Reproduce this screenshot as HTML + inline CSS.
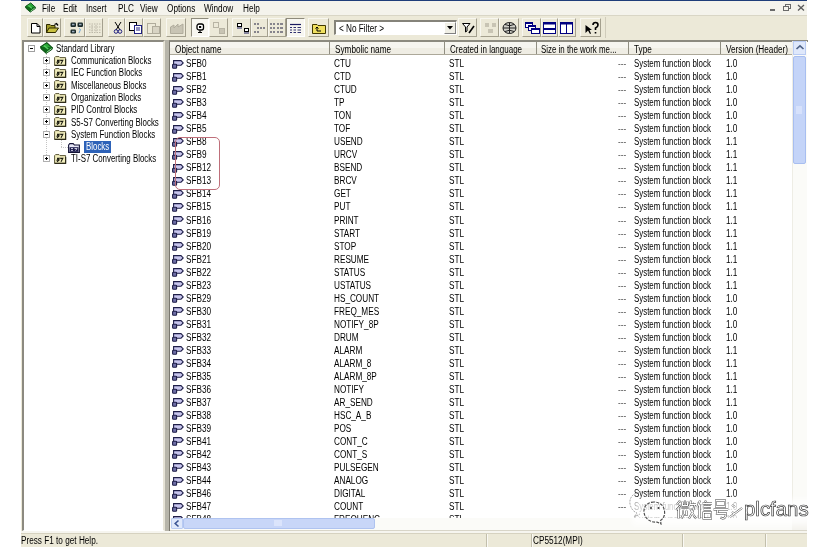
<!DOCTYPE html><html><head><meta charset="utf-8"><style>
*{margin:0;padding:0;box-sizing:border-box}
html,body{width:836px;height:547px;overflow:hidden;background:#fff}
body{position:relative;font-family:"Liberation Sans",sans-serif;font-size:10px;color:#000}
.a{position:absolute}
.t{position:absolute;white-space:nowrap;line-height:11px;transform:scaleX(.82);transform-origin:0 0}
.r{transform-origin:100% 0}
.tr{transform:scaleX(.79)}
svg{position:absolute;overflow:visible}
</style></head><body>

<div class="a" style="left:21px;top:0;width:786px;height:547px;background:#ece9d8"></div>
<div class="a" style="left:21px;top:0;width:786px;height:1px;background:#1f3d7a"></div>
<div class="a" style="left:21px;top:1px;width:786px;height:15px;background:#f4f3ec"></div>
<div class="a" style="left:21px;top:15px;width:786px;height:1px;background:#d9d6c6"></div>
<svg style="left:25px;top:2px" width="11" height="11" viewBox="0 0 13 12">
<path d="M0.8 4.6 L6.8 0.6 L12.2 5.6 L6.2 10.2 Z" fill="#2aa838" stroke="#0b4a12" stroke-width="1.1"/>
<path d="M0.8 4.6 L0.8 6.6 L6.2 11.4 L12.2 7.2 L12.2 5.6" fill="#0e6a1a" stroke="#0b4a12" stroke-width="1"/>
<path d="M6.6 10.4 L11.6 6.6" stroke="#9be39f" stroke-width="1"/>
<path d="M4 3.6 L8.2 7" stroke="#55d060" stroke-width="1.6"/>
</svg>
<div class="t" style="left:41.5px;top:2.6px;">File</div>
<div class="t" style="left:62.8px;top:2.6px;">Edit</div>
<div class="t" style="left:85.8px;top:2.6px;">Insert</div>
<div class="t" style="left:117.8px;top:2.6px;">PLC</div>
<div class="t" style="left:140.2px;top:2.6px;">View</div>
<div class="t" style="left:166.5px;top:2.6px;">Options</div>
<div class="t" style="left:204.0px;top:2.6px;">Window</div>
<div class="t" style="left:242.8px;top:2.6px;">Help</div>
<div class="a" style="left:770px;top:9px;width:5px;height:2px;background:#6a6a6a"></div>
<svg style="left:783px;top:4px" width="8" height="7"><rect x="2.5" y="0.5" width="5" height="4" fill="none" stroke="#6a6a6a"/><rect x="0.5" y="2.5" width="5" height="4" fill="#f4f3ec" stroke="#6a6a6a"/></svg>
<svg style="left:797px;top:4px" width="8" height="7"><path d="M1 1 L7 6.5 M7 1 L1 6.5" stroke="#5a5a5a" stroke-width="1.3"/></svg>
<div class="a" style="left:27px;top:18px;width:16px;height:19px;border-right:1px solid #a4a08e;border-bottom:1px solid #a4a08e;border-left:1px solid #f8f7f0;border-top:1px solid #f8f7f0"></div>
<div class="a" style="left:43px;top:18px;width:18px;height:19px;border-right:1px solid #a4a08e;border-bottom:1px solid #a4a08e;border-left:1px solid #f8f7f0;border-top:1px solid #f8f7f0"></div>
<div class="a" style="left:64px;top:18px;width:21px;height:19px;border-right:1px solid #a4a08e;border-bottom:1px solid #a4a08e;border-left:1px solid #f8f7f0;border-top:1px solid #f8f7f0"></div>
<div class="a" style="left:85px;top:18px;width:18px;height:19px;border-right:1px solid #a4a08e;border-bottom:1px solid #a4a08e;border-left:1px solid #f8f7f0;border-top:1px solid #f8f7f0"></div>
<div class="a" style="left:108px;top:18px;width:17px;height:19px;border-right:1px solid #a4a08e;border-bottom:1px solid #a4a08e;border-left:1px solid #f8f7f0;border-top:1px solid #f8f7f0"></div>
<div class="a" style="left:125px;top:18px;width:18px;height:19px;border-right:1px solid #a4a08e;border-bottom:1px solid #a4a08e;border-left:1px solid #f8f7f0;border-top:1px solid #f8f7f0"></div>
<div class="a" style="left:143px;top:18px;width:18px;height:19px;border-right:1px solid #a4a08e;border-bottom:1px solid #a4a08e;border-left:1px solid #f8f7f0;border-top:1px solid #f8f7f0"></div>
<div class="a" style="left:166px;top:18px;width:20px;height:19px;border-right:1px solid #a4a08e;border-bottom:1px solid #a4a08e;border-left:1px solid #f8f7f0;border-top:1px solid #f8f7f0"></div>
<div class="a" style="left:191px;top:18px;width:18px;height:19px;background:#f7f6f0;border-right:1px solid #fff;border-bottom:1px solid #fff;border-left:1px solid #8d8a7c;border-top:1px solid #8d8a7c"></div>
<div class="a" style="left:209px;top:18px;width:19px;height:19px;border-right:1px solid #a4a08e;border-bottom:1px solid #a4a08e;border-left:1px solid #f8f7f0;border-top:1px solid #f8f7f0"></div>
<div class="a" style="left:232px;top:18px;width:19px;height:19px;border-right:1px solid #a4a08e;border-bottom:1px solid #a4a08e;border-left:1px solid #f8f7f0;border-top:1px solid #f8f7f0"></div>
<div class="a" style="left:251px;top:18px;width:17px;height:19px;border-right:1px solid #a4a08e;border-bottom:1px solid #a4a08e;border-left:1px solid #f8f7f0;border-top:1px solid #f8f7f0"></div>
<div class="a" style="left:268px;top:18px;width:18px;height:19px;border-right:1px solid #a4a08e;border-bottom:1px solid #a4a08e;border-left:1px solid #f8f7f0;border-top:1px solid #f8f7f0"></div>
<div class="a" style="left:286px;top:18px;width:19px;height:19px;background:#f7f6f0;border-right:1px solid #fff;border-bottom:1px solid #fff;border-left:1px solid #8d8a7c;border-top:1px solid #8d8a7c"></div>
<div class="a" style="left:308px;top:18px;width:21px;height:19px;border-right:1px solid #a4a08e;border-bottom:1px solid #a4a08e;border-left:1px solid #f8f7f0;border-top:1px solid #f8f7f0"></div>
<div class="a" style="left:458px;top:18px;width:19px;height:19px;border-right:1px solid #a4a08e;border-bottom:1px solid #a4a08e;border-left:1px solid #f8f7f0;border-top:1px solid #f8f7f0"></div>
<div class="a" style="left:480px;top:18px;width:19px;height:19px;border-right:1px solid #a4a08e;border-bottom:1px solid #a4a08e;border-left:1px solid #f8f7f0;border-top:1px solid #f8f7f0"></div>
<div class="a" style="left:499px;top:18px;width:20px;height:19px;border-right:1px solid #a4a08e;border-bottom:1px solid #a4a08e;border-left:1px solid #f8f7f0;border-top:1px solid #f8f7f0"></div>
<div class="a" style="left:522px;top:18px;width:19px;height:19px;border-right:1px solid #a4a08e;border-bottom:1px solid #a4a08e;border-left:1px solid #f8f7f0;border-top:1px solid #f8f7f0"></div>
<div class="a" style="left:541px;top:18px;width:17px;height:19px;border-right:1px solid #a4a08e;border-bottom:1px solid #a4a08e;border-left:1px solid #f8f7f0;border-top:1px solid #f8f7f0"></div>
<div class="a" style="left:558px;top:18px;width:18px;height:19px;border-right:1px solid #a4a08e;border-bottom:1px solid #a4a08e;border-left:1px solid #f8f7f0;border-top:1px solid #f8f7f0"></div>
<div class="a" style="left:580px;top:18px;width:21px;height:19px;border-right:1px solid #a4a08e;border-bottom:1px solid #a4a08e;border-left:1px solid #f8f7f0;border-top:1px solid #f8f7f0"></div>
<div class="a" style="left:605px;top:17px;width:1px;height:21px;background:#d0ccbb"></div>
<div class="a" style="left:334px;top:21px;width:123px;height:14px;background:#fff;border:1px solid #7f9db9"></div>
<div class="a" style="left:334px;top:20px;width:123px;height:15px;border-top:2px solid #85837a;border-left:2px solid #85837a;border-bottom:1px solid #fff;border-right:1px solid #fff"></div>
<div class="a" style="left:444px;top:22px;width:12px;height:12px;background:#f0efe6;border-right:1px solid #808080;border-bottom:1px solid #808080;border-top:1px solid #fff;border-left:1px solid #fff"></div>
<svg style="left:447px;top:26px" width="7" height="4"><path d="M0 0 L6 0 L3 3.5 Z" fill="#000"/></svg>
<div class="t" style="left:339.0px;top:22.6px;">&lt; No Filter &gt;</div>
<svg style="left:31px;top:23px" width="10" height="11"><path d="M0.5 0.5 H6 L9 3.5 V10 H0.5 Z" fill="#fff" stroke="#000"/><path d="M6 0.5 V3.5 H9" fill="none" stroke="#000"/></svg>
<svg style="left:46px;top:23px" width="13" height="10"><path d="M0.5 1.5 H4 L5 2.5 H9 V9.5 H0.5 Z" fill="#a09a28" stroke="#2e2a00"/><path d="M0.5 9.5 L3 5 H12.5 L9.5 9.5 Z" fill="#c8c040" stroke="#2e2a00"/><path d="M8.5 1.5 L10.5 0.5 L12 2.5" fill="none" stroke="#000" stroke-width="1.3"/></svg>
<svg style="left:70px;top:22px" width="14" height="12"><rect x="0.5" y="0.5" width="5.5" height="4.5" rx="1.2" fill="#1a2a2a"/><rect x="7.5" y="0.5" width="5.5" height="4.5" rx="1.2" fill="#1a2a2a"/><rect x="0.5" y="7.5" width="5.5" height="4" rx="1.2" fill="#1a2a2a"/><rect x="2" y="1.8" width="2.5" height="1.5" fill="#9ab"/><rect x="9" y="1.8" width="2.5" height="1.5" fill="#9ab"/><rect x="2" y="8.8" width="2.5" height="1.5" fill="#9ab"/><path d="M9 6.5 L10.5 7.5 L9 11" stroke="#70a8d8" fill="none"/></svg>
<svg style="left:89px;top:23px" width="12" height="10"><path d="M0 1 H12 M0 4 H12 M0 7 H12 M0 9.5 H12 M3 2 V9 M7 2 V9" stroke="#bcb8a8" stroke-dasharray="1.5 1"/></svg>
<svg style="left:114px;top:22px" width="8" height="12"><path d="M1 0 L6 8 M7 0 L2 8" stroke="#000"/><circle cx="2" cy="9.5" r="1.8" fill="none" stroke="#202080"/><circle cx="6" cy="9.5" r="1.8" fill="none" stroke="#202080"/></svg>
<svg style="left:129px;top:22px" width="13" height="12"><rect x="0.5" y="0.5" width="7" height="8" fill="#fff" stroke="#000"/><rect x="5.5" y="3.5" width="7" height="8" fill="#fff" stroke="#202080"/><path d="M7 6 H11 M7 8 H11" stroke="#202080"/></svg>
<svg style="left:147px;top:22px" width="13" height="12"><rect x="0.5" y="1.5" width="8" height="10" fill="none" stroke="#b0ac9c"/><rect x="5.5" y="4.5" width="7" height="7" fill="#d8d4c4" stroke="#b0ac9c"/></svg>
<svg style="left:170px;top:22px" width="14" height="12"><path d="M0.5 11.5 V5 L4 3 V6 L8 2 V5 L13 2 V11.5 Z" fill="#c8c4b4" stroke="#b0ac9c"/></svg>
<svg style="left:196px;top:23px" width="9" height="10"><rect x="1" y="1" width="6.5" height="6" rx="2" fill="#fff" stroke="#000" stroke-width="1.3"/><rect x="3" y="3" width="2.2" height="2" fill="#000"/><path d="M4 7.5 V9.5 M2 9.5 H6" stroke="#000" stroke-width="1.2"/></svg>
<svg style="left:213px;top:22px" width="12" height="12"><rect x="0.5" y="0.5" width="5" height="5" fill="none" stroke="#b8b4a4"/><rect x="6.5" y="6.5" width="5" height="5" fill="#c8c4b4" stroke="#b8b4a4"/></svg>
<svg style="left:237px;top:23px" width="12" height="11"><rect x="0.5" y="0.5" width="4" height="3" fill="#fff" stroke="#000"/><rect x="7.5" y="5.5" width="4" height="3" fill="#fff" stroke="#000"/><path d="M0 5 H5 M7 10 H12" stroke="#202060"/></svg>
<svg style="left:254px;top:23px" width="12" height="11"><path d="M0 1 H2 M3 1 H5 M3 5 H5 M6 5 H8 M9 5 H11 M0 9 H2 M3 9 H5" stroke="#202040" stroke-width="1.1"/></svg>
<svg style="left:270px;top:23px" width="14" height="11"><path d="M0 1 H2 M3 1 H5 M7 1 H9 M10 1 H13 M0 5 H2 M3 5 H5 M7 5 H9 M10 5 H13 M0 9 H2 M3 9 H5 M7 9 H9 M10 9 H13" stroke="#202040" stroke-width="1.1"/></svg>
<svg style="left:289px;top:23px" width="13" height="11"><path d="M1 1.5 H12" stroke="#1a1a60" stroke-width="1.2"/><path d="M1 4.5 H3 M4.5 4.5 H7 M8.5 4.5 H12 M1 7 H3 M4.5 7 H7 M8.5 7 H12 M1 9.5 H3 M4.5 9.5 H7 M8.5 9.5 H12" stroke="#303070" stroke-width="1.2"/></svg>
<svg style="left:312px;top:22px" width="14" height="12"><path d="M0.5 2.5 H5 L6 3.5 H13.5 V11.5 H0.5 Z" fill="#f0e060" stroke="#403800"/><path d="M5 9 H9 M5 9 V5 L3.5 6.5 M5 5 L6.5 6.5" stroke="#000" fill="none"/></svg>
<svg style="left:462px;top:23px" width="13" height="11"><path d="M0.5 0.5 H8 L5 4 V8 L3.5 9 V4 Z" fill="#fff" stroke="#000"/><path d="M7 10 L12 3" stroke="#000" stroke-width="1.6"/></svg>
<svg style="left:484px;top:22px" width="13" height="12"><rect x="1" y="1" width="4" height="4" fill="#c8c4b4"/><rect x="8" y="1" width="4" height="4" fill="#c8c4b4"/><rect x="4" y="7" width="5" height="4" fill="#c8c4b4"/></svg>
<svg style="left:502px;top:22px" width="15" height="12"><ellipse cx="7.5" cy="6" rx="6.5" ry="5.5" fill="#d0d0c8" stroke="#202020"/><path d="M1 6 H14 M7.5 0.5 V11.5 M3 2.5 Q7.5 5 12 2.5 M3 9.5 Q7.5 7 12 9.5" stroke="#202020" fill="none"/></svg>
<svg style="left:525px;top:22px" width="15" height="12"><rect x="0.5" y="0.5" width="7" height="5" fill="#fff" stroke="#000080"/><rect x="0.5" y="0.5" width="7" height="1.5" fill="#000080"/><rect x="3.5" y="3.5" width="7" height="5" fill="#fff" stroke="#000080"/><rect x="3.5" y="3.5" width="7" height="1.5" fill="#000080"/><rect x="6.5" y="6.5" width="8" height="5" fill="#fff" stroke="#000080"/><rect x="6.5" y="6.5" width="8" height="1.5" fill="#000080"/></svg>
<svg style="left:543px;top:22px" width="13" height="12"><rect x="0.5" y="0.5" width="12" height="11" fill="#fff" stroke="#000080"/><rect x="0.5" y="0.5" width="12" height="2" fill="#000080"/><rect x="0.5" y="6" width="12" height="2" fill="#000080"/></svg>
<svg style="left:560px;top:22px" width="13" height="12"><rect x="0.5" y="0.5" width="12" height="11" fill="#fff" stroke="#000080"/><rect x="0.5" y="0.5" width="12" height="2" fill="#000080"/><path d="M6.5 1 V12" stroke="#000080"/></svg>
<svg style="left:585px;top:22px" width="14" height="12"><path d="M0.5 3 L0.5 11 L3 8.5 L5 12 L6 11.5 L4.5 8 L7 8 Z" fill="#000"/><path d="M8 3 Q8 0.5 10.5 0.5 Q13 0.5 13 3 Q13 5 10.5 6 V8 M10.5 10 V11.5" stroke="#000" stroke-width="1.6" fill="none"/></svg>
<div class="a" style="left:22px;top:40px;width:143px;height:491px;background:#fff;border-left:2px solid #8c8a80;border-top:2px solid #8c8a80;border-right:2px solid #e6e3d6;border-bottom:1px solid #fff"></div>
<div class="a" style="left:165px;top:40px;width:4px;height:491px;background:#b7b5aa"></div>
<div class="a" style="left:169px;top:40px;width:639px;height:491px;background:#fff;border-left:1px solid #7a786e;border-top:2px solid #8c8a80"></div>
<div class="a" style="left:46px;top:52px;width:0;height:107px;border-left:1px dotted #c4c4c4"></div>
<div class="a" style="left:61px;top:140px;width:0;height:7px;border-left:1px dotted #c4c4c4"></div>
<div class="a" style="left:61px;top:147px;width:7px;height:0;border-top:1px dotted #c4c4c4"></div>
<div class="a" style="left:28px;top:45px;width:7px;height:7px;border:1px solid #a0a0a0;background:#fff"></div>
<div class="a" style="left:30px;top:48px;width:3px;height:1px;background:#000"></div>
<svg style="left:39.5px;top:42px" width="13" height="12" viewBox="0 0 13 12">
<path d="M0.8 4.6 L6.8 0.6 L12.2 5.6 L6.2 10.2 Z" fill="#2aa838" stroke="#0b4a12" stroke-width="1.1"/>
<path d="M0.8 4.6 L0.8 6.6 L6.2 11.4 L12.2 7.2 L12.2 5.6" fill="#0e6a1a" stroke="#0b4a12" stroke-width="1"/>
<path d="M6.6 10.4 L11.6 6.6" stroke="#9be39f" stroke-width="1"/>
<path d="M4 3.6 L8.2 7" stroke="#55d060" stroke-width="1.6"/>
</svg>
<div class="t tr" style="left:56.0px;top:43.4px;">Standard Library</div>
<div class="a" style="left:43px;top:57px;width:7px;height:7px;border:1px solid #b0b0b0;background:#fff"></div>
<div class="a" style="left:45px;top:60px;width:3px;height:1px;background:#000"></div>
<div class="a" style="left:46px;top:59px;width:1px;height:3px;background:#000"></div>
<svg style="left:54px;top:55.8px" width="13" height="10"><path d="M0.6 1.6 L1.6 0.6 H5 L6 1.6 H11.6 V9.4 H0.6 Z" fill="#f2eebd" stroke="#5a5638" stroke-width="1"/><path d="M0.6 9.4 H11.6 V3" fill="none" stroke="#2e2c1a" stroke-width="1.2"/><path d="M3 4.4 H5 L3.2 6 H5 L3 7.8 M6.2 4.4 H8.8 L7 7.8" fill="none" stroke="#1a1a10" stroke-width="1.1"/></svg>
<div class="t tr" style="left:71.2px;top:55.0px;">Communication Blocks</div>
<div class="a" style="left:43px;top:69px;width:7px;height:7px;border:1px solid #b0b0b0;background:#fff"></div>
<div class="a" style="left:45px;top:72px;width:3px;height:1px;background:#000"></div>
<div class="a" style="left:46px;top:71px;width:1px;height:3px;background:#000"></div>
<svg style="left:54px;top:68.1px" width="13" height="10"><path d="M0.6 1.6 L1.6 0.6 H5 L6 1.6 H11.6 V9.4 H0.6 Z" fill="#f2eebd" stroke="#5a5638" stroke-width="1"/><path d="M0.6 9.4 H11.6 V3" fill="none" stroke="#2e2c1a" stroke-width="1.2"/><path d="M3 4.4 H5 L3.2 6 H5 L3 7.8 M6.2 4.4 H8.8 L7 7.8" fill="none" stroke="#1a1a10" stroke-width="1.1"/></svg>
<div class="t tr" style="left:71.2px;top:67.3px;">IEC Function Blocks</div>
<div class="a" style="left:43px;top:82px;width:7px;height:7px;border:1px solid #b0b0b0;background:#fff"></div>
<div class="a" style="left:45px;top:85px;width:3px;height:1px;background:#000"></div>
<div class="a" style="left:46px;top:84px;width:1px;height:3px;background:#000"></div>
<svg style="left:54px;top:80.4px" width="13" height="10"><path d="M0.6 1.6 L1.6 0.6 H5 L6 1.6 H11.6 V9.4 H0.6 Z" fill="#f2eebd" stroke="#5a5638" stroke-width="1"/><path d="M0.6 9.4 H11.6 V3" fill="none" stroke="#2e2c1a" stroke-width="1.2"/><path d="M3 4.4 H5 L3.2 6 H5 L3 7.8 M6.2 4.4 H8.8 L7 7.8" fill="none" stroke="#1a1a10" stroke-width="1.1"/></svg>
<div class="t tr" style="left:71.2px;top:79.6px;">Miscellaneous Blocks</div>
<div class="a" style="left:43px;top:94px;width:7px;height:7px;border:1px solid #b0b0b0;background:#fff"></div>
<div class="a" style="left:45px;top:97px;width:3px;height:1px;background:#000"></div>
<div class="a" style="left:46px;top:96px;width:1px;height:3px;background:#000"></div>
<svg style="left:54px;top:92.7px" width="13" height="10"><path d="M0.6 1.6 L1.6 0.6 H5 L6 1.6 H11.6 V9.4 H0.6 Z" fill="#f2eebd" stroke="#5a5638" stroke-width="1"/><path d="M0.6 9.4 H11.6 V3" fill="none" stroke="#2e2c1a" stroke-width="1.2"/><path d="M3 4.4 H5 L3.2 6 H5 L3 7.8 M6.2 4.4 H8.8 L7 7.8" fill="none" stroke="#1a1a10" stroke-width="1.1"/></svg>
<div class="t tr" style="left:71.2px;top:91.9px;">Organization Blocks</div>
<div class="a" style="left:43px;top:106px;width:7px;height:7px;border:1px solid #b0b0b0;background:#fff"></div>
<div class="a" style="left:45px;top:109px;width:3px;height:1px;background:#000"></div>
<div class="a" style="left:46px;top:108px;width:1px;height:3px;background:#000"></div>
<svg style="left:54px;top:105.0px" width="13" height="10"><path d="M0.6 1.6 L1.6 0.6 H5 L6 1.6 H11.6 V9.4 H0.6 Z" fill="#f2eebd" stroke="#5a5638" stroke-width="1"/><path d="M0.6 9.4 H11.6 V3" fill="none" stroke="#2e2c1a" stroke-width="1.2"/><path d="M3 4.4 H5 L3.2 6 H5 L3 7.8 M6.2 4.4 H8.8 L7 7.8" fill="none" stroke="#1a1a10" stroke-width="1.1"/></svg>
<div class="t tr" style="left:71.2px;top:104.2px;">PID Control Blocks</div>
<div class="a" style="left:43px;top:118px;width:7px;height:7px;border:1px solid #b0b0b0;background:#fff"></div>
<div class="a" style="left:45px;top:121px;width:3px;height:1px;background:#000"></div>
<div class="a" style="left:46px;top:120px;width:1px;height:3px;background:#000"></div>
<svg style="left:54px;top:117.3px" width="13" height="10"><path d="M0.6 1.6 L1.6 0.6 H5 L6 1.6 H11.6 V9.4 H0.6 Z" fill="#f2eebd" stroke="#5a5638" stroke-width="1"/><path d="M0.6 9.4 H11.6 V3" fill="none" stroke="#2e2c1a" stroke-width="1.2"/><path d="M3 4.4 H5 L3.2 6 H5 L3 7.8 M6.2 4.4 H8.8 L7 7.8" fill="none" stroke="#1a1a10" stroke-width="1.1"/></svg>
<div class="t tr" style="left:71.2px;top:116.5px;">S5-S7 Converting Blocks</div>
<div class="a" style="left:43px;top:131px;width:7px;height:7px;border:1px solid #b0b0b0;background:#fff"></div>
<div class="a" style="left:45px;top:134px;width:3px;height:1px;background:#000"></div>
<svg style="left:54px;top:129.6px" width="13" height="10"><path d="M0.6 1.6 L1.6 0.6 H5 L6 1.6 H11.6 V9.4 H0.6 Z" fill="#f2eebd" stroke="#5a5638" stroke-width="1"/><path d="M0.6 9.4 H11.6 V3" fill="none" stroke="#2e2c1a" stroke-width="1.2"/><path d="M3 4.4 H5 L3.2 6 H5 L3 7.8 M6.2 4.4 H8.8 L7 7.8" fill="none" stroke="#1a1a10" stroke-width="1.1"/></svg>
<div class="t tr" style="left:71.2px;top:128.8px;">System Function Blocks</div>
<svg style="left:68px;top:142.5px" width="13" height="10"><path d="M0.6 2 L1.8 0.6 H5.2 L6.4 2 H11.4 V9.4 H0.6 Z" fill="#e6e6f6" stroke="#141438" stroke-width="1.1"/><rect x="1.5" y="4.2" width="9" height="4.6" fill="#1c1c4c"/><path d="M3 5.5 H5 M3 7.4 H5 M6.5 5.5 H9 L7.5 7.6" stroke="#e0e0f0" stroke-width="0.9" fill="none"/></svg>
<div class="a" style="left:83.5px;top:140.5px;width:27px;height:12px;background:#2d62b8"></div>
<div class="t tr" style="left:85.5px;top:141.1px;color:#fff">Blocks</div>
<div class="a" style="left:43px;top:155px;width:7px;height:7px;border:1px solid #b0b0b0;background:#fff"></div>
<div class="a" style="left:45px;top:158px;width:3px;height:1px;background:#000"></div>
<div class="a" style="left:46px;top:157px;width:1px;height:3px;background:#000"></div>
<svg style="left:54px;top:154.2px" width="13" height="10"><path d="M0.6 1.6 L1.6 0.6 H5 L6 1.6 H11.6 V9.4 H0.6 Z" fill="#f2eebd" stroke="#5a5638" stroke-width="1"/><path d="M0.6 9.4 H11.6 V3" fill="none" stroke="#2e2c1a" stroke-width="1.2"/><path d="M3 4.4 H5 L3.2 6 H5 L3 7.8 M6.2 4.4 H8.8 L7 7.8" fill="none" stroke="#1a1a10" stroke-width="1.1"/></svg>
<div class="t tr" style="left:71.2px;top:153.4px;">TI-S7 Converting Blocks</div>
<div class="a" style="left:170px;top:42px;width:622px;height:13px;background:#efede4;border-bottom:1px solid #aca899"></div>
<div class="a" style="left:170px;top:42px;width:622px;height:6px;background:#f6f5f0"></div>
<div class="a" style="left:329px;top:42px;width:1px;height:12px;background:#908e82"></div>
<div class="a" style="left:444px;top:42px;width:1px;height:12px;background:#908e82"></div>
<div class="a" style="left:536px;top:42px;width:1px;height:12px;background:#908e82"></div>
<div class="a" style="left:628px;top:42px;width:1px;height:12px;background:#908e82"></div>
<div class="a" style="left:720px;top:42px;width:1px;height:12px;background:#908e82"></div>
<div class="t" style="left:175.2px;top:43.6px;transform:scaleX(0.82)">Object name</div>
<div class="t" style="left:334.5px;top:43.6px;transform:scaleX(0.82)">Symbolic name</div>
<div class="t" style="left:449.8px;top:43.6px;transform:scaleX(0.8)">Created in language</div>
<div class="t" style="left:541.0px;top:43.6px;transform:scaleX(0.79)">Size in the work me...</div>
<div class="t" style="left:634.0px;top:43.6px;transform:scaleX(0.82)">Type</div>
<div class="t" style="left:726.0px;top:43.6px;transform:scaleX(0.82)">Version (Header)</div>
<div class="a" style="left:170px;top:55px;width:622px;height:463px;overflow:hidden">
<svg style="left:2px;top:4.5px" width="13" height="9"><path d="M1.6 0.6 H9 L11.2 2.9 L9 5.2 H1.6 Z" fill="#c9c7ef" stroke="#1e1e48" stroke-width="1.1"/><rect x="0.6" y="4.3" width="4" height="3.9" rx="0.8" fill="#6e6ea6" stroke="#1e1e48" stroke-width="1.1"/></svg>
<div class="t" style="left:15.7px;top:3.1px;">SFB0</div>
<div class="t" style="left:164.4px;top:3.1px;">CTU</div>
<div class="t" style="left:279.2px;top:3.1px;">STL</div>
<div class="t" style="left:447.5px;top:3.1px;color:#666">---</div>
<div class="t" style="left:464.0px;top:3.1px;transform:scaleX(.79)">System function block</div>
<div class="t" style="left:556.3px;top:3.1px;">1.0</div>
<svg style="left:2px;top:17.5px" width="13" height="9"><path d="M1.6 0.6 H9 L11.2 2.9 L9 5.2 H1.6 Z" fill="#c9c7ef" stroke="#1e1e48" stroke-width="1.1"/><rect x="0.6" y="4.3" width="4" height="3.9" rx="0.8" fill="#6e6ea6" stroke="#1e1e48" stroke-width="1.1"/></svg>
<div class="t" style="left:15.7px;top:16.1px;">SFB1</div>
<div class="t" style="left:164.4px;top:16.1px;">CTD</div>
<div class="t" style="left:279.2px;top:16.1px;">STL</div>
<div class="t" style="left:447.5px;top:16.1px;color:#666">---</div>
<div class="t" style="left:464.0px;top:16.1px;transform:scaleX(.79)">System function block</div>
<div class="t" style="left:556.3px;top:16.1px;">1.0</div>
<svg style="left:2px;top:30.6px" width="13" height="9"><path d="M1.6 0.6 H9 L11.2 2.9 L9 5.2 H1.6 Z" fill="#c9c7ef" stroke="#1e1e48" stroke-width="1.1"/><rect x="0.6" y="4.3" width="4" height="3.9" rx="0.8" fill="#6e6ea6" stroke="#1e1e48" stroke-width="1.1"/></svg>
<div class="t" style="left:15.7px;top:29.2px;">SFB2</div>
<div class="t" style="left:164.4px;top:29.2px;">CTUD</div>
<div class="t" style="left:279.2px;top:29.2px;">STL</div>
<div class="t" style="left:447.5px;top:29.2px;color:#666">---</div>
<div class="t" style="left:464.0px;top:29.2px;transform:scaleX(.79)">System function block</div>
<div class="t" style="left:556.3px;top:29.2px;">1.0</div>
<svg style="left:2px;top:43.6px" width="13" height="9"><path d="M1.6 0.6 H9 L11.2 2.9 L9 5.2 H1.6 Z" fill="#c9c7ef" stroke="#1e1e48" stroke-width="1.1"/><rect x="0.6" y="4.3" width="4" height="3.9" rx="0.8" fill="#6e6ea6" stroke="#1e1e48" stroke-width="1.1"/></svg>
<div class="t" style="left:15.7px;top:42.2px;">SFB3</div>
<div class="t" style="left:164.4px;top:42.2px;">TP</div>
<div class="t" style="left:279.2px;top:42.2px;">STL</div>
<div class="t" style="left:447.5px;top:42.2px;color:#666">---</div>
<div class="t" style="left:464.0px;top:42.2px;transform:scaleX(.79)">System function block</div>
<div class="t" style="left:556.3px;top:42.2px;">1.0</div>
<svg style="left:2px;top:56.6px" width="13" height="9"><path d="M1.6 0.6 H9 L11.2 2.9 L9 5.2 H1.6 Z" fill="#c9c7ef" stroke="#1e1e48" stroke-width="1.1"/><rect x="0.6" y="4.3" width="4" height="3.9" rx="0.8" fill="#6e6ea6" stroke="#1e1e48" stroke-width="1.1"/></svg>
<div class="t" style="left:15.7px;top:55.2px;">SFB4</div>
<div class="t" style="left:164.4px;top:55.2px;">TON</div>
<div class="t" style="left:279.2px;top:55.2px;">STL</div>
<div class="t" style="left:447.5px;top:55.2px;color:#666">---</div>
<div class="t" style="left:464.0px;top:55.2px;transform:scaleX(.79)">System function block</div>
<div class="t" style="left:556.3px;top:55.2px;">1.0</div>
<svg style="left:2px;top:69.6px" width="13" height="9"><path d="M1.6 0.6 H9 L11.2 2.9 L9 5.2 H1.6 Z" fill="#c9c7ef" stroke="#1e1e48" stroke-width="1.1"/><rect x="0.6" y="4.3" width="4" height="3.9" rx="0.8" fill="#6e6ea6" stroke="#1e1e48" stroke-width="1.1"/></svg>
<div class="t" style="left:15.7px;top:68.2px;">SFB5</div>
<div class="t" style="left:164.4px;top:68.2px;">TOF</div>
<div class="t" style="left:279.2px;top:68.2px;">STL</div>
<div class="t" style="left:447.5px;top:68.2px;color:#666">---</div>
<div class="t" style="left:464.0px;top:68.2px;transform:scaleX(.79)">System function block</div>
<div class="t" style="left:556.3px;top:68.2px;">1.0</div>
<svg style="left:2px;top:82.7px" width="13" height="9"><path d="M1.6 0.6 H9 L11.2 2.9 L9 5.2 H1.6 Z" fill="#c9c7ef" stroke="#1e1e48" stroke-width="1.1"/><rect x="0.6" y="4.3" width="4" height="3.9" rx="0.8" fill="#6e6ea6" stroke="#1e1e48" stroke-width="1.1"/></svg>
<div class="t" style="left:15.7px;top:81.3px;">SFB8</div>
<div class="t" style="left:164.4px;top:81.3px;">USEND</div>
<div class="t" style="left:279.2px;top:81.3px;">STL</div>
<div class="t" style="left:447.5px;top:81.3px;color:#666">---</div>
<div class="t" style="left:464.0px;top:81.3px;transform:scaleX(.79)">System function block</div>
<div class="t" style="left:556.3px;top:81.3px;">1.1</div>
<svg style="left:2px;top:95.7px" width="13" height="9"><path d="M1.6 0.6 H9 L11.2 2.9 L9 5.2 H1.6 Z" fill="#c9c7ef" stroke="#1e1e48" stroke-width="1.1"/><rect x="0.6" y="4.3" width="4" height="3.9" rx="0.8" fill="#6e6ea6" stroke="#1e1e48" stroke-width="1.1"/></svg>
<div class="t" style="left:15.7px;top:94.3px;">SFB9</div>
<div class="t" style="left:164.4px;top:94.3px;">URCV</div>
<div class="t" style="left:279.2px;top:94.3px;">STL</div>
<div class="t" style="left:447.5px;top:94.3px;color:#666">---</div>
<div class="t" style="left:464.0px;top:94.3px;transform:scaleX(.79)">System function block</div>
<div class="t" style="left:556.3px;top:94.3px;">1.1</div>
<svg style="left:2px;top:108.7px" width="13" height="9"><path d="M1.6 0.6 H9 L11.2 2.9 L9 5.2 H1.6 Z" fill="#c9c7ef" stroke="#1e1e48" stroke-width="1.1"/><rect x="0.6" y="4.3" width="4" height="3.9" rx="0.8" fill="#6e6ea6" stroke="#1e1e48" stroke-width="1.1"/></svg>
<div class="t" style="left:15.7px;top:107.3px;">SFB12</div>
<div class="t" style="left:164.4px;top:107.3px;">BSEND</div>
<div class="t" style="left:279.2px;top:107.3px;">STL</div>
<div class="t" style="left:447.5px;top:107.3px;color:#666">---</div>
<div class="t" style="left:464.0px;top:107.3px;transform:scaleX(.79)">System function block</div>
<div class="t" style="left:556.3px;top:107.3px;">1.1</div>
<svg style="left:2px;top:121.8px" width="13" height="9"><path d="M1.6 0.6 H9 L11.2 2.9 L9 5.2 H1.6 Z" fill="#c9c7ef" stroke="#1e1e48" stroke-width="1.1"/><rect x="0.6" y="4.3" width="4" height="3.9" rx="0.8" fill="#6e6ea6" stroke="#1e1e48" stroke-width="1.1"/></svg>
<div class="t" style="left:15.7px;top:120.4px;">SFB13</div>
<div class="t" style="left:164.4px;top:120.4px;">BRCV</div>
<div class="t" style="left:279.2px;top:120.4px;">STL</div>
<div class="t" style="left:447.5px;top:120.4px;color:#666">---</div>
<div class="t" style="left:464.0px;top:120.4px;transform:scaleX(.79)">System function block</div>
<div class="t" style="left:556.3px;top:120.4px;">1.1</div>
<svg style="left:2px;top:134.8px" width="13" height="9"><path d="M1.6 0.6 H9 L11.2 2.9 L9 5.2 H1.6 Z" fill="#c9c7ef" stroke="#1e1e48" stroke-width="1.1"/><rect x="0.6" y="4.3" width="4" height="3.9" rx="0.8" fill="#6e6ea6" stroke="#1e1e48" stroke-width="1.1"/></svg>
<div class="t" style="left:15.7px;top:133.4px;">SFB14</div>
<div class="t" style="left:164.4px;top:133.4px;">GET</div>
<div class="t" style="left:279.2px;top:133.4px;">STL</div>
<div class="t" style="left:447.5px;top:133.4px;color:#666">---</div>
<div class="t" style="left:464.0px;top:133.4px;transform:scaleX(.79)">System function block</div>
<div class="t" style="left:556.3px;top:133.4px;">1.1</div>
<svg style="left:2px;top:147.8px" width="13" height="9"><path d="M1.6 0.6 H9 L11.2 2.9 L9 5.2 H1.6 Z" fill="#c9c7ef" stroke="#1e1e48" stroke-width="1.1"/><rect x="0.6" y="4.3" width="4" height="3.9" rx="0.8" fill="#6e6ea6" stroke="#1e1e48" stroke-width="1.1"/></svg>
<div class="t" style="left:15.7px;top:146.4px;">SFB15</div>
<div class="t" style="left:164.4px;top:146.4px;">PUT</div>
<div class="t" style="left:279.2px;top:146.4px;">STL</div>
<div class="t" style="left:447.5px;top:146.4px;color:#666">---</div>
<div class="t" style="left:464.0px;top:146.4px;transform:scaleX(.79)">System function block</div>
<div class="t" style="left:556.3px;top:146.4px;">1.1</div>
<svg style="left:2px;top:160.9px" width="13" height="9"><path d="M1.6 0.6 H9 L11.2 2.9 L9 5.2 H1.6 Z" fill="#c9c7ef" stroke="#1e1e48" stroke-width="1.1"/><rect x="0.6" y="4.3" width="4" height="3.9" rx="0.8" fill="#6e6ea6" stroke="#1e1e48" stroke-width="1.1"/></svg>
<div class="t" style="left:15.7px;top:159.5px;">SFB16</div>
<div class="t" style="left:164.4px;top:159.5px;">PRINT</div>
<div class="t" style="left:279.2px;top:159.5px;">STL</div>
<div class="t" style="left:447.5px;top:159.5px;color:#666">---</div>
<div class="t" style="left:464.0px;top:159.5px;transform:scaleX(.79)">System function block</div>
<div class="t" style="left:556.3px;top:159.5px;">1.1</div>
<svg style="left:2px;top:173.9px" width="13" height="9"><path d="M1.6 0.6 H9 L11.2 2.9 L9 5.2 H1.6 Z" fill="#c9c7ef" stroke="#1e1e48" stroke-width="1.1"/><rect x="0.6" y="4.3" width="4" height="3.9" rx="0.8" fill="#6e6ea6" stroke="#1e1e48" stroke-width="1.1"/></svg>
<div class="t" style="left:15.7px;top:172.5px;">SFB19</div>
<div class="t" style="left:164.4px;top:172.5px;">START</div>
<div class="t" style="left:279.2px;top:172.5px;">STL</div>
<div class="t" style="left:447.5px;top:172.5px;color:#666">---</div>
<div class="t" style="left:464.0px;top:172.5px;transform:scaleX(.79)">System function block</div>
<div class="t" style="left:556.3px;top:172.5px;">1.1</div>
<svg style="left:2px;top:186.9px" width="13" height="9"><path d="M1.6 0.6 H9 L11.2 2.9 L9 5.2 H1.6 Z" fill="#c9c7ef" stroke="#1e1e48" stroke-width="1.1"/><rect x="0.6" y="4.3" width="4" height="3.9" rx="0.8" fill="#6e6ea6" stroke="#1e1e48" stroke-width="1.1"/></svg>
<div class="t" style="left:15.7px;top:185.5px;">SFB20</div>
<div class="t" style="left:164.4px;top:185.5px;">STOP</div>
<div class="t" style="left:279.2px;top:185.5px;">STL</div>
<div class="t" style="left:447.5px;top:185.5px;color:#666">---</div>
<div class="t" style="left:464.0px;top:185.5px;transform:scaleX(.79)">System function block</div>
<div class="t" style="left:556.3px;top:185.5px;">1.1</div>
<svg style="left:2px;top:199.9px" width="13" height="9"><path d="M1.6 0.6 H9 L11.2 2.9 L9 5.2 H1.6 Z" fill="#c9c7ef" stroke="#1e1e48" stroke-width="1.1"/><rect x="0.6" y="4.3" width="4" height="3.9" rx="0.8" fill="#6e6ea6" stroke="#1e1e48" stroke-width="1.1"/></svg>
<div class="t" style="left:15.7px;top:198.5px;">SFB21</div>
<div class="t" style="left:164.4px;top:198.5px;">RESUME</div>
<div class="t" style="left:279.2px;top:198.5px;">STL</div>
<div class="t" style="left:447.5px;top:198.5px;color:#666">---</div>
<div class="t" style="left:464.0px;top:198.5px;transform:scaleX(.79)">System function block</div>
<div class="t" style="left:556.3px;top:198.5px;">1.1</div>
<svg style="left:2px;top:213.0px" width="13" height="9"><path d="M1.6 0.6 H9 L11.2 2.9 L9 5.2 H1.6 Z" fill="#c9c7ef" stroke="#1e1e48" stroke-width="1.1"/><rect x="0.6" y="4.3" width="4" height="3.9" rx="0.8" fill="#6e6ea6" stroke="#1e1e48" stroke-width="1.1"/></svg>
<div class="t" style="left:15.7px;top:211.6px;">SFB22</div>
<div class="t" style="left:164.4px;top:211.6px;">STATUS</div>
<div class="t" style="left:279.2px;top:211.6px;">STL</div>
<div class="t" style="left:447.5px;top:211.6px;color:#666">---</div>
<div class="t" style="left:464.0px;top:211.6px;transform:scaleX(.79)">System function block</div>
<div class="t" style="left:556.3px;top:211.6px;">1.1</div>
<svg style="left:2px;top:226.0px" width="13" height="9"><path d="M1.6 0.6 H9 L11.2 2.9 L9 5.2 H1.6 Z" fill="#c9c7ef" stroke="#1e1e48" stroke-width="1.1"/><rect x="0.6" y="4.3" width="4" height="3.9" rx="0.8" fill="#6e6ea6" stroke="#1e1e48" stroke-width="1.1"/></svg>
<div class="t" style="left:15.7px;top:224.6px;">SFB23</div>
<div class="t" style="left:164.4px;top:224.6px;">USTATUS</div>
<div class="t" style="left:279.2px;top:224.6px;">STL</div>
<div class="t" style="left:447.5px;top:224.6px;color:#666">---</div>
<div class="t" style="left:464.0px;top:224.6px;transform:scaleX(.79)">System function block</div>
<div class="t" style="left:556.3px;top:224.6px;">1.1</div>
<svg style="left:2px;top:239.0px" width="13" height="9"><path d="M1.6 0.6 H9 L11.2 2.9 L9 5.2 H1.6 Z" fill="#c9c7ef" stroke="#1e1e48" stroke-width="1.1"/><rect x="0.6" y="4.3" width="4" height="3.9" rx="0.8" fill="#6e6ea6" stroke="#1e1e48" stroke-width="1.1"/></svg>
<div class="t" style="left:15.7px;top:237.6px;">SFB29</div>
<div class="t" style="left:164.4px;top:237.6px;">HS_COUNT</div>
<div class="t" style="left:279.2px;top:237.6px;">STL</div>
<div class="t" style="left:447.5px;top:237.6px;color:#666">---</div>
<div class="t" style="left:464.0px;top:237.6px;transform:scaleX(.79)">System function block</div>
<div class="t" style="left:556.3px;top:237.6px;">1.0</div>
<svg style="left:2px;top:252.1px" width="13" height="9"><path d="M1.6 0.6 H9 L11.2 2.9 L9 5.2 H1.6 Z" fill="#c9c7ef" stroke="#1e1e48" stroke-width="1.1"/><rect x="0.6" y="4.3" width="4" height="3.9" rx="0.8" fill="#6e6ea6" stroke="#1e1e48" stroke-width="1.1"/></svg>
<div class="t" style="left:15.7px;top:250.7px;">SFB30</div>
<div class="t" style="left:164.4px;top:250.7px;">FREQ_MES</div>
<div class="t" style="left:279.2px;top:250.7px;">STL</div>
<div class="t" style="left:447.5px;top:250.7px;color:#666">---</div>
<div class="t" style="left:464.0px;top:250.7px;transform:scaleX(.79)">System function block</div>
<div class="t" style="left:556.3px;top:250.7px;">1.0</div>
<svg style="left:2px;top:265.1px" width="13" height="9"><path d="M1.6 0.6 H9 L11.2 2.9 L9 5.2 H1.6 Z" fill="#c9c7ef" stroke="#1e1e48" stroke-width="1.1"/><rect x="0.6" y="4.3" width="4" height="3.9" rx="0.8" fill="#6e6ea6" stroke="#1e1e48" stroke-width="1.1"/></svg>
<div class="t" style="left:15.7px;top:263.7px;">SFB31</div>
<div class="t" style="left:164.4px;top:263.7px;">NOTIFY_8P</div>
<div class="t" style="left:279.2px;top:263.7px;">STL</div>
<div class="t" style="left:447.5px;top:263.7px;color:#666">---</div>
<div class="t" style="left:464.0px;top:263.7px;transform:scaleX(.79)">System function block</div>
<div class="t" style="left:556.3px;top:263.7px;">1.0</div>
<svg style="left:2px;top:278.1px" width="13" height="9"><path d="M1.6 0.6 H9 L11.2 2.9 L9 5.2 H1.6 Z" fill="#c9c7ef" stroke="#1e1e48" stroke-width="1.1"/><rect x="0.6" y="4.3" width="4" height="3.9" rx="0.8" fill="#6e6ea6" stroke="#1e1e48" stroke-width="1.1"/></svg>
<div class="t" style="left:15.7px;top:276.7px;">SFB32</div>
<div class="t" style="left:164.4px;top:276.7px;">DRUM</div>
<div class="t" style="left:279.2px;top:276.7px;">STL</div>
<div class="t" style="left:447.5px;top:276.7px;color:#666">---</div>
<div class="t" style="left:464.0px;top:276.7px;transform:scaleX(.79)">System function block</div>
<div class="t" style="left:556.3px;top:276.7px;">1.0</div>
<svg style="left:2px;top:291.2px" width="13" height="9"><path d="M1.6 0.6 H9 L11.2 2.9 L9 5.2 H1.6 Z" fill="#c9c7ef" stroke="#1e1e48" stroke-width="1.1"/><rect x="0.6" y="4.3" width="4" height="3.9" rx="0.8" fill="#6e6ea6" stroke="#1e1e48" stroke-width="1.1"/></svg>
<div class="t" style="left:15.7px;top:289.8px;">SFB33</div>
<div class="t" style="left:164.4px;top:289.8px;">ALARM</div>
<div class="t" style="left:279.2px;top:289.8px;">STL</div>
<div class="t" style="left:447.5px;top:289.8px;color:#666">---</div>
<div class="t" style="left:464.0px;top:289.8px;transform:scaleX(.79)">System function block</div>
<div class="t" style="left:556.3px;top:289.8px;">1.1</div>
<svg style="left:2px;top:304.2px" width="13" height="9"><path d="M1.6 0.6 H9 L11.2 2.9 L9 5.2 H1.6 Z" fill="#c9c7ef" stroke="#1e1e48" stroke-width="1.1"/><rect x="0.6" y="4.3" width="4" height="3.9" rx="0.8" fill="#6e6ea6" stroke="#1e1e48" stroke-width="1.1"/></svg>
<div class="t" style="left:15.7px;top:302.8px;">SFB34</div>
<div class="t" style="left:164.4px;top:302.8px;">ALARM_8</div>
<div class="t" style="left:279.2px;top:302.8px;">STL</div>
<div class="t" style="left:447.5px;top:302.8px;color:#666">---</div>
<div class="t" style="left:464.0px;top:302.8px;transform:scaleX(.79)">System function block</div>
<div class="t" style="left:556.3px;top:302.8px;">1.1</div>
<svg style="left:2px;top:317.2px" width="13" height="9"><path d="M1.6 0.6 H9 L11.2 2.9 L9 5.2 H1.6 Z" fill="#c9c7ef" stroke="#1e1e48" stroke-width="1.1"/><rect x="0.6" y="4.3" width="4" height="3.9" rx="0.8" fill="#6e6ea6" stroke="#1e1e48" stroke-width="1.1"/></svg>
<div class="t" style="left:15.7px;top:315.8px;">SFB35</div>
<div class="t" style="left:164.4px;top:315.8px;">ALARM_8P</div>
<div class="t" style="left:279.2px;top:315.8px;">STL</div>
<div class="t" style="left:447.5px;top:315.8px;color:#666">---</div>
<div class="t" style="left:464.0px;top:315.8px;transform:scaleX(.79)">System function block</div>
<div class="t" style="left:556.3px;top:315.8px;">1.1</div>
<svg style="left:2px;top:330.2px" width="13" height="9"><path d="M1.6 0.6 H9 L11.2 2.9 L9 5.2 H1.6 Z" fill="#c9c7ef" stroke="#1e1e48" stroke-width="1.1"/><rect x="0.6" y="4.3" width="4" height="3.9" rx="0.8" fill="#6e6ea6" stroke="#1e1e48" stroke-width="1.1"/></svg>
<div class="t" style="left:15.7px;top:328.9px;">SFB36</div>
<div class="t" style="left:164.4px;top:328.9px;">NOTIFY</div>
<div class="t" style="left:279.2px;top:328.9px;">STL</div>
<div class="t" style="left:447.5px;top:328.9px;color:#666">---</div>
<div class="t" style="left:464.0px;top:328.9px;transform:scaleX(.79)">System function block</div>
<div class="t" style="left:556.3px;top:328.9px;">1.1</div>
<svg style="left:2px;top:343.3px" width="13" height="9"><path d="M1.6 0.6 H9 L11.2 2.9 L9 5.2 H1.6 Z" fill="#c9c7ef" stroke="#1e1e48" stroke-width="1.1"/><rect x="0.6" y="4.3" width="4" height="3.9" rx="0.8" fill="#6e6ea6" stroke="#1e1e48" stroke-width="1.1"/></svg>
<div class="t" style="left:15.7px;top:341.9px;">SFB37</div>
<div class="t" style="left:164.4px;top:341.9px;">AR_SEND</div>
<div class="t" style="left:279.2px;top:341.9px;">STL</div>
<div class="t" style="left:447.5px;top:341.9px;color:#666">---</div>
<div class="t" style="left:464.0px;top:341.9px;transform:scaleX(.79)">System function block</div>
<div class="t" style="left:556.3px;top:341.9px;">1.1</div>
<svg style="left:2px;top:356.3px" width="13" height="9"><path d="M1.6 0.6 H9 L11.2 2.9 L9 5.2 H1.6 Z" fill="#c9c7ef" stroke="#1e1e48" stroke-width="1.1"/><rect x="0.6" y="4.3" width="4" height="3.9" rx="0.8" fill="#6e6ea6" stroke="#1e1e48" stroke-width="1.1"/></svg>
<div class="t" style="left:15.7px;top:354.9px;">SFB38</div>
<div class="t" style="left:164.4px;top:354.9px;">HSC_A_B</div>
<div class="t" style="left:279.2px;top:354.9px;">STL</div>
<div class="t" style="left:447.5px;top:354.9px;color:#666">---</div>
<div class="t" style="left:464.0px;top:354.9px;transform:scaleX(.79)">System function block</div>
<div class="t" style="left:556.3px;top:354.9px;">1.0</div>
<svg style="left:2px;top:369.3px" width="13" height="9"><path d="M1.6 0.6 H9 L11.2 2.9 L9 5.2 H1.6 Z" fill="#c9c7ef" stroke="#1e1e48" stroke-width="1.1"/><rect x="0.6" y="4.3" width="4" height="3.9" rx="0.8" fill="#6e6ea6" stroke="#1e1e48" stroke-width="1.1"/></svg>
<div class="t" style="left:15.7px;top:367.9px;">SFB39</div>
<div class="t" style="left:164.4px;top:367.9px;">POS</div>
<div class="t" style="left:279.2px;top:367.9px;">STL</div>
<div class="t" style="left:447.5px;top:367.9px;color:#666">---</div>
<div class="t" style="left:464.0px;top:367.9px;transform:scaleX(.79)">System function block</div>
<div class="t" style="left:556.3px;top:367.9px;">1.0</div>
<svg style="left:2px;top:382.4px" width="13" height="9"><path d="M1.6 0.6 H9 L11.2 2.9 L9 5.2 H1.6 Z" fill="#c9c7ef" stroke="#1e1e48" stroke-width="1.1"/><rect x="0.6" y="4.3" width="4" height="3.9" rx="0.8" fill="#6e6ea6" stroke="#1e1e48" stroke-width="1.1"/></svg>
<div class="t" style="left:15.7px;top:381.0px;">SFB41</div>
<div class="t" style="left:164.4px;top:381.0px;">CONT_C</div>
<div class="t" style="left:279.2px;top:381.0px;">STL</div>
<div class="t" style="left:447.5px;top:381.0px;color:#666">---</div>
<div class="t" style="left:464.0px;top:381.0px;transform:scaleX(.79)">System function block</div>
<div class="t" style="left:556.3px;top:381.0px;">1.0</div>
<svg style="left:2px;top:395.4px" width="13" height="9"><path d="M1.6 0.6 H9 L11.2 2.9 L9 5.2 H1.6 Z" fill="#c9c7ef" stroke="#1e1e48" stroke-width="1.1"/><rect x="0.6" y="4.3" width="4" height="3.9" rx="0.8" fill="#6e6ea6" stroke="#1e1e48" stroke-width="1.1"/></svg>
<div class="t" style="left:15.7px;top:394.0px;">SFB42</div>
<div class="t" style="left:164.4px;top:394.0px;">CONT_S</div>
<div class="t" style="left:279.2px;top:394.0px;">STL</div>
<div class="t" style="left:447.5px;top:394.0px;color:#666">---</div>
<div class="t" style="left:464.0px;top:394.0px;transform:scaleX(.79)">System function block</div>
<div class="t" style="left:556.3px;top:394.0px;">1.0</div>
<svg style="left:2px;top:408.4px" width="13" height="9"><path d="M1.6 0.6 H9 L11.2 2.9 L9 5.2 H1.6 Z" fill="#c9c7ef" stroke="#1e1e48" stroke-width="1.1"/><rect x="0.6" y="4.3" width="4" height="3.9" rx="0.8" fill="#6e6ea6" stroke="#1e1e48" stroke-width="1.1"/></svg>
<div class="t" style="left:15.7px;top:407.0px;">SFB43</div>
<div class="t" style="left:164.4px;top:407.0px;">PULSEGEN</div>
<div class="t" style="left:279.2px;top:407.0px;">STL</div>
<div class="t" style="left:447.5px;top:407.0px;color:#666">---</div>
<div class="t" style="left:464.0px;top:407.0px;transform:scaleX(.79)">System function block</div>
<div class="t" style="left:556.3px;top:407.0px;">1.0</div>
<svg style="left:2px;top:421.5px" width="13" height="9"><path d="M1.6 0.6 H9 L11.2 2.9 L9 5.2 H1.6 Z" fill="#c9c7ef" stroke="#1e1e48" stroke-width="1.1"/><rect x="0.6" y="4.3" width="4" height="3.9" rx="0.8" fill="#6e6ea6" stroke="#1e1e48" stroke-width="1.1"/></svg>
<div class="t" style="left:15.7px;top:420.1px;">SFB44</div>
<div class="t" style="left:164.4px;top:420.1px;">ANALOG</div>
<div class="t" style="left:279.2px;top:420.1px;">STL</div>
<div class="t" style="left:447.5px;top:420.1px;color:#666">---</div>
<div class="t" style="left:464.0px;top:420.1px;transform:scaleX(.79)">System function block</div>
<div class="t" style="left:556.3px;top:420.1px;">1.0</div>
<svg style="left:2px;top:434.5px" width="13" height="9"><path d="M1.6 0.6 H9 L11.2 2.9 L9 5.2 H1.6 Z" fill="#c9c7ef" stroke="#1e1e48" stroke-width="1.1"/><rect x="0.6" y="4.3" width="4" height="3.9" rx="0.8" fill="#6e6ea6" stroke="#1e1e48" stroke-width="1.1"/></svg>
<div class="t" style="left:15.7px;top:433.1px;">SFB46</div>
<div class="t" style="left:164.4px;top:433.1px;">DIGITAL</div>
<div class="t" style="left:279.2px;top:433.1px;">STL</div>
<div class="t" style="left:447.5px;top:433.1px;color:#666">---</div>
<div class="t" style="left:464.0px;top:433.1px;transform:scaleX(.79)">System function block</div>
<div class="t" style="left:556.3px;top:433.1px;">1.0</div>
<svg style="left:2px;top:447.5px" width="13" height="9"><path d="M1.6 0.6 H9 L11.2 2.9 L9 5.2 H1.6 Z" fill="#c9c7ef" stroke="#1e1e48" stroke-width="1.1"/><rect x="0.6" y="4.3" width="4" height="3.9" rx="0.8" fill="#6e6ea6" stroke="#1e1e48" stroke-width="1.1"/></svg>
<div class="t" style="left:15.7px;top:446.1px;">SFB47</div>
<div class="t" style="left:164.4px;top:446.1px;">COUNT</div>
<div class="t" style="left:279.2px;top:446.1px;">STL</div>
<div class="t" style="left:447.5px;top:446.1px;color:#666">---</div>
<div class="t" style="left:464.0px;top:446.1px;transform:scaleX(.79)">System function block</div>
<div class="t" style="left:556.3px;top:446.1px;">1.0</div>
<svg style="left:2px;top:460.5px" width="13" height="9"><path d="M1.6 0.6 H9 L11.2 2.9 L9 5.2 H1.6 Z" fill="#c9c7ef" stroke="#1e1e48" stroke-width="1.1"/><rect x="0.6" y="4.3" width="4" height="3.9" rx="0.8" fill="#6e6ea6" stroke="#1e1e48" stroke-width="1.1"/></svg>
<div class="t" style="left:15.7px;top:459.1px;">SFB48</div>
<div class="t" style="left:164.4px;top:459.1px;">FREQUENC</div>
<div class="t" style="left:279.2px;top:459.1px;">STL</div>
<div class="t" style="left:447.5px;top:459.1px;color:#666">---</div>
<div class="t" style="left:464.0px;top:459.1px;transform:scaleX(.79)">System function block</div>
<div class="t" style="left:556.3px;top:459.1px;">1.0</div>
</div>
<div class="a" style="left:792px;top:41px;width:15px;height:477px;background:#fbfbf8;border-left:1px solid #eeede5"></div>
<div class="a" style="left:793px;top:41px;width:13px;height:14px;background:#dfe8fb;border:1px solid #b9cbf3"></div>
<svg style="left:796px;top:45px" width="8" height="5"><path d="M0.5 4 L4 0.8 L7.5 4" stroke="#4d6185" stroke-width="1.6" fill="none"/></svg>
<div class="a" style="left:793px;top:56px;width:13px;height:108px;background:#c4d4f8;border:1px solid #a8bef0;border-radius:2px"></div>
<svg style="left:796px;top:106px" width="7" height="8"><path d="M0 1 H6 M0 3 H6 M0 5 H6 M0 7 H6" stroke="#e8eeff" stroke-width="1"/></svg>
<div class="a" style="left:170px;top:518px;width:622px;height:13px;background:#fbfbf8"></div>
<div class="a" style="left:170px;top:530px;width:637px;height:1px;background:#d8d5c8"></div>
<div class="a" style="left:171px;top:518px;width:12px;height:11px;background:#dfe8fb;border:1px solid #b9cbf3;border-radius:1px"></div>
<svg style="left:174px;top:520px" width="6" height="7"><path d="M4.5 0.5 L1.2 3.5 L4.5 6.5" stroke="#3a5494" stroke-width="1.6" fill="none"/></svg>
<div class="a" style="left:183px;top:518px;width:192px;height:11px;background:#c8d6f8;border:1px solid #afc3f0;border-radius:2px"></div>
<svg style="left:274px;top:520px" width="8" height="7"><path d="M1 0 V6 M3 0 V6 M5 0 V6 M7 0 V6" stroke="#eef2ff"/></svg>
<div class="a" style="left:792px;top:518px;width:15px;height:12px;background:#f4f3ee"></div>
<div class="a" style="left:21px;top:531px;width:786px;height:3px;background:#f6f5ef"></div>
<div class="a" style="left:174.5px;top:137px;width:45px;height:53px;border:1.1px solid #bf6f7a;border-radius:5px"></div>
<div class="a" style="left:21px;top:531px;width:786px;height:16px;background:#ece9d8"></div>
<div class="a" style="left:21px;top:531px;width:786px;height:2px;background:#f6f5ef"></div>
<div class="a" style="left:21px;top:533px;width:786px;height:1px;background:#d6d2c0"></div>
<div class="a" style="left:486px;top:534px;width:1px;height:13px;background:#c2bfac"></div>
<div class="a" style="left:487px;top:534px;width:1px;height:13px;background:#faf9f4"></div>
<div class="a" style="left:531px;top:534px;width:1px;height:13px;background:#c2bfac"></div>
<div class="a" style="left:532px;top:534px;width:1px;height:13px;background:#faf9f4"></div>
<div class="a" style="left:682px;top:534px;width:1px;height:13px;background:#c2bfac"></div>
<div class="a" style="left:683px;top:534px;width:1px;height:13px;background:#faf9f4"></div>
<div class="a" style="left:765px;top:534px;width:1px;height:13px;background:#c2bfac"></div>
<div class="a" style="left:766px;top:534px;width:1px;height:13px;background:#faf9f4"></div>
<div class="t" style="left:21.2px;top:535.3px;">Press F1 to get Help.</div>
<div class="t" style="left:532.8px;top:535.3px;">CP5512(MPI)</div>
<div class="a" style="left:632px;top:499px;width:180px;height:26px;background:rgba(255,255,255,.8);filter:blur(3px)"></div>
<svg style="left:628px;top:490px" width="40" height="36">
<path d="M14 2 C5 2 1 8 2 14 C3 19 6 22 9 23 L6 27 L12 24" fill="none" stroke="#aaa" stroke-width="1" stroke-dasharray="2 1"/>
<path d="M26 12 C20 12 15.5 16 16 22 C16.5 28 22 33 29 32 L33 34 L32.5 30.5 C36 28 37 25 36.5 21 C36 16 32 12 26 12 Z" fill="none" stroke="#444" stroke-width="1.1" stroke-dasharray="3 1.2"/>
<circle cx="23" cy="18" r="1" fill="#333"/><circle cx="30.5" cy="18" r="1" fill="#333"/>
</svg>
<svg style="left:675px;top:499px" width="72" height="22" viewBox="0 0 72 22">
<defs><g id="wm" fill="none">
<!-- 微 -->
<path d="M5 1.5 L2 5.5 M5.5 6.5 L1.5 11 M3.5 9.5 V19.5 M7.5 2.5 V6.5 H12.5 V2.5 M10 1.5 V6.5 M6.5 9 H13.5 M8 11.5 V16 H11.5 V11.5 M8 16 L6.5 19.5 M16 1.5 L14.5 7 M14.5 5.5 H21 M19.5 5.5 Q18.5 13 14 19.5 M15.5 9.5 Q17.5 15.5 21 19.5"/>
<!-- 信 -->
<path d="M25 1.5 L22.5 8 M24.5 5.5 V19.5 M30 1.5 L31 3 M27.5 4.5 H37 M28.5 7.5 H36 M28.5 10.5 H36 M28.5 13.5 V19.5 H36 V13.5 Z"/>
<!-- 号 -->
<path d="M41 1.5 V7.5 H50 V1.5 Z M38.5 10.5 H53 M43 10.5 L42 14.5 H51 Q51 19.5 47.5 19.5 L45.5 18.5"/>
<!-- colon-ish -->
<path d="M57 6 L60 8 M57 13 L60 15 M55 18 L67 9"/>
</g></defs>
<use href="#wm" stroke="#383838" stroke-width="2.0"/>
<use href="#wm" stroke="#fff" stroke-width="1.1"/>
</svg>
<div class="a" style="left:744px;top:498px;font-size:20px;line-height:22px;color:#fff;-webkit-text-stroke:0.7px #3a3a3a;white-space:nowrap;transform:scaleX(1.02);transform-origin:0 0">plcfans</div>
</body></html>
